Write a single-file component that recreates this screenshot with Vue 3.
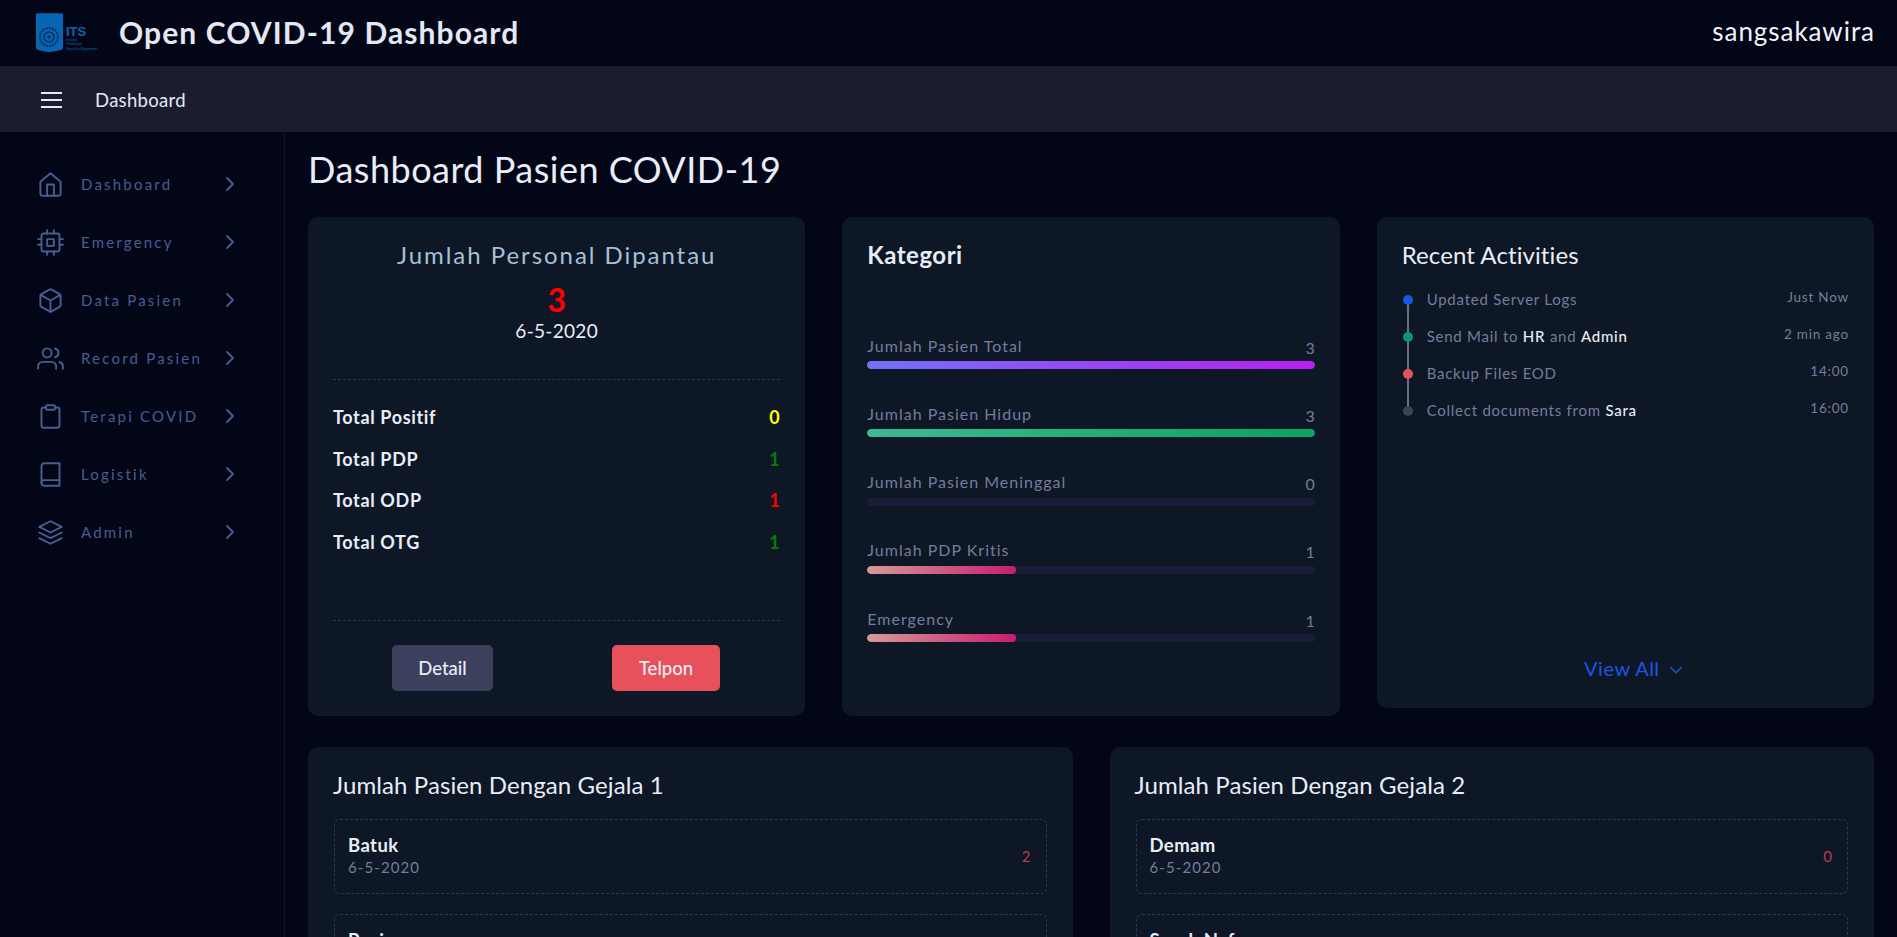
<script setup>
const nav = [
  { label: 'Dashboard', icon: 'home' },
  { label: 'Emergency', icon: 'cpu' },
  { label: 'Data Pasien', icon: 'box' },
  { label: 'Record Pasien', icon: 'users' },
  { label: 'Terapi COVID', icon: 'clip' },
  { label: 'Logistik', icon: 'book' },
  { label: 'Admin', icon: 'layers' },
]
const totals = [
  { label: 'Total Positif', value: 0, color: '#ffff00' },
  { label: 'Total PDP', value: 1, color: '#008000' },
  { label: 'Total ODP', value: 1, color: '#ff0000' },
  { label: 'Total OTG', value: 1, color: '#008000' },
]
const cats = [
  { label: 'Jumlah Pasien Total', value: 3, width: '100%', fill: 'linear-gradient(90deg,#7571f9,#b81ff0)' },
  { label: 'Jumlah Pasien Hidup', value: 3, width: '100%', fill: 'linear-gradient(90deg,#3cba92,#0ba360)' },
  { label: 'Jumlah Pasien Meninggal', value: 0, width: '0%', fill: 'none' },
  { label: 'Jumlah PDP Kritis', value: 1, width: '33.3%', fill: 'linear-gradient(90deg,#d69a98,#c71d6f)' },
  { label: 'Emergency', value: 1, width: '33.3%', fill: 'linear-gradient(90deg,#d69a98,#c71d6f)' },
]
const lists = [
  { title: 'Jumlah Pasien Dengan Gejala 1', rows: [{ n: 'Batuk', v: 2 }, { n: 'Pusing', v: 1 }] },
  { title: 'Jumlah Pasien Dengan Gejala 2', rows: [{ n: 'Demam', v: 0 }, { n: 'Sesak Nafas', v: 1 }] },
]
</script>

<template>
  <div class="page">
    <header class="topbar">
      <svg class="logo" width="68" height="40" viewBox="0 0 68 40">
        <path d="M0 0.5 C9 0 18 0 27 0.5 L27 35 C27 37 20 38.5 13.5 39 C7 38.5 0 37 0 35 Z" fill="#0567b3"/>
        <circle cx="13" cy="24" r="9" fill="none" stroke="#04315f" stroke-width="2" stroke-dasharray="2 1"/>
        <circle cx="13" cy="24" r="5" fill="none" stroke="#04315f" stroke-width="1.4"/>
        <circle cx="13" cy="24" r="1.8" fill="#04315f"/>
        <text x="30" y="22.5" class="logo-its">ITS</text>
        <text x="30" y="27.5" class="logo-sm">Institut</text>
        <text x="30" y="32" class="logo-sm">Teknologi</text>
        <text x="30" y="36.5" class="logo-sm">Sepuluh Nopember</text>
      </svg>
      <div class="brand">Open COVID-19 Dashboard</div>
      <div class="user">sangsakawira</div>
    </header>
    <div class="subbar">
      <span class="burger"><i></i><i></i><i></i></span>
      <span class="crumb">Dashboard</span>
    </div>
    <div class="body">
      <aside class="side">
        <a v-for="n in nav" :key="n.label" class="nav">
          <svg class="nav-ic" width="27" height="27" viewBox="0 0 24 24" fill="none" stroke="currentColor" stroke-width="1.7" stroke-linecap="round" stroke-linejoin="round">
            <template v-if="n.icon === 'home'">
              <path d="M3 9.5 12 2l9 7.5V20a2 2 0 0 1-2 2H5a2 2 0 0 1-2-2z"/><path d="M9 22V12h6v10"/>
            </template>
            <template v-else-if="n.icon === 'cpu'">
              <rect x="4" y="4" width="16" height="16" rx="2"/><rect x="9" y="9" width="6" height="6"/>
              <path d="M9 1v3M15 1v3M9 20v3M15 20v3M20 9h3M20 14h3M1 9h3M1 14h3"/>
            </template>
            <template v-else-if="n.icon === 'box'">
              <path d="M21 16V8a2 2 0 0 0-1-1.73l-7-4a2 2 0 0 0-2 0l-7 4A2 2 0 0 0 3 8v8a2 2 0 0 0 1 1.73l7 4a2 2 0 0 0 2 0l7-4A2 2 0 0 0 21 16z"/>
              <path d="M3.3 7 12 12l8.7-5M12 22V12"/>
            </template>
            <template v-else-if="n.icon === 'users'">
              <path d="M17 21v-2a4 4 0 0 0-4-4H5a4 4 0 0 0-4 4v2"/><circle cx="9" cy="7" r="4"/>
              <path d="M23 21v-2a4 4 0 0 0-3-3.87M16 3.13a4 4 0 0 1 0 7.75"/>
            </template>
            <template v-else-if="n.icon === 'clip'">
              <path d="M16 4h2a2 2 0 0 1 2 2v14a2 2 0 0 1-2 2H6a2 2 0 0 1-2-2V6a2 2 0 0 1 2-2h2"/>
              <rect x="8" y="2" width="8" height="4" rx="1"/>
            </template>
            <template v-else-if="n.icon === 'book'">
              <path d="M4 19.5A2.5 2.5 0 0 1 6.5 17H20"/><path d="M6.5 2H20v20H6.5A2.5 2.5 0 0 1 4 19.5v-15A2.5 2.5 0 0 1 6.5 2z"/>
            </template>
            <template v-else>
              <path d="M12 2 2 7l10 5 10-5z"/><path d="m2 17 10 5 10-5M2 12l10 5 10-5"/>
            </template>
          </svg>
          <span class="nav-label">{{ n.label }}</span>
          <svg class="nav-ch" width="24" height="24" viewBox="0 0 24 24" fill="none" stroke="currentColor" stroke-width="1.8" stroke-linecap="round" stroke-linejoin="round"><path d="m9 18 6-6-6-6"/></svg>
        </a>
      </aside>
      <main class="main">
        <h1 class="page-title">Dashboard Pasien COVID-19</h1>
        <div class="three">
          <section class="card c1">
            <h2 class="c1-title">Jumlah Personal Dipantau</h2>
            <div class="c1-num">3</div>
            <div class="c1-date">6-5-2020</div>
            <div class="totals">
              <div v-for="t in totals" :key="t.label" class="total">
                <span>{{ t.label }}</span>
                <span :style="{ color: t.color }">{{ t.value }}</span>
              </div>
            </div>
            <div class="btns">
              <button class="btn b-d">Detail</button>
              <button class="btn b-t">Telpon</button>
            </div>
          </section>
          <section class="card c2">
            <h2 class="h-semi">Kategori</h2>
            <div class="cats">
              <div v-for="c in cats" :key="c.label" class="cat">
                <div class="cat-top"><span class="cat-l">{{ c.label }}</span><span class="cat-v">{{ c.value }}</span></div>
                <div class="track"><div class="fill" :style="{ width: c.width, background: c.fill }"></div></div>
              </div>
            </div>
          </section>
          <section class="card c3">
            <h2 class="h-reg">Recent Activities</h2>
            <ul class="tl">
              <li class="tl-row"><i class="dot d-blue"></i><span class="tl-t">Updated Server Logs</span><span class="tl-time">Just Now</span></li>
              <li class="tl-row"><i class="dot d-teal"></i><span class="tl-t">Send Mail to <b>HR</b> and <b>Admin</b></span><span class="tl-time">2 min ago</span></li>
              <li class="tl-row"><i class="dot d-red"></i><span class="tl-t">Backup Files EOD</span><span class="tl-time">14:00</span></li>
              <li class="tl-row"><i class="dot d-gray"></i><span class="tl-t">Collect documents from <b>Sara</b></span><span class="tl-time">16:00</span></li>
            </ul>
            <a class="viewall">View All
              <svg width="22" height="22" viewBox="0 0 24 24" fill="none" stroke="currentColor" stroke-width="1.5" stroke-linecap="round" stroke-linejoin="round"><path d="m6 9 6 6 6-6"/></svg>
            </a>
          </section>
        </div>
        <div class="two">
          <section v-for="l in lists" :key="l.title" class="card lcard">
            <h2 class="h-reg">{{ l.title }}</h2>
            <div v-for="r in l.rows" :key="r.n" class="lrow">
              <div><div class="lname">{{ r.n }}</div><div class="ldate">6-5-2020</div></div>
              <span class="lval">{{ r.v }}</span>
            </div>
          </section>
        </div>
      </main>
    </div>
  </div>
</template>

<style>
html, body { margin: 0; background: #030617; overflow: hidden; }
</style>

<style scoped>
.page { height: 937px; overflow: hidden; background: #030617; font-family: "Lato", "Open Sans", sans-serif; color: #e4e8f2; }
.topbar { height: 67px; box-sizing: border-box; border-bottom: 1px solid #1b1d2e; display: flex; align-items: center; padding: 0 23px 0 36px; }
.logo { flex: none; }
.logo-its { font: 700 13px "Liberation Sans", sans-serif; fill: #0567b3; }
.logo-sm { font: 3.7px "Liberation Sans", sans-serif; fill: #0567b3; }
.brand { margin: 0 0 2px 15px; font-size: 30px; font-weight: 700; letter-spacing: 1.1px; color: #e4e8f2; }
.user { margin: 0 -1px 5px auto; font-size: 26px; letter-spacing: .95px; color: #f0f3fa; }
.subbar { height: 65px; background: #1b1d2e; display: flex; align-items: center; padding-left: 41px; }
.burger { display: flex; flex-direction: column; gap: 5px; width: 21px; }
.burger i { display: block; height: 2px; background: #e4e8f2; }
.crumb { margin-left: 33px; font-size: 18.5px; letter-spacing: .3px; color: #e4e8f2; }
.body { display: flex; }
.side { width: 284px; height: 805px; flex: none; border-right: 1px solid #0e1525; padding-top: 23px; box-sizing: content-box; }
.nav { height: 58px; display: flex; align-items: center; padding-left: 37px; color: #475e90; }
.nav-ic { flex: none; }
.nav-label { margin-left: 17px; width: 137px; font-size: 15px; letter-spacing: 2.2px; white-space: nowrap; }
.nav-ch { flex: none; }
.main { flex: 1; padding: 0 23px 0 23px; min-width: 0; }
.page-title { margin: 17px 0 28px; font-size: 36px; line-height: 40px; font-weight: 400; letter-spacing: .5px; color: #e9edf6; }
.three { display: grid; grid-template-columns: repeat(3, 1fr); gap: 37px; align-items: start; }
.card { background: #0e1726; border-radius: 10px; box-sizing: border-box; }
.c1, .c2 { height: 499px; }
.c3 { height: 491px; position: relative; padding: 23px 25px 0 25px; }
.c1 { padding: 23px 25px 0; text-align: center; }
.c1-title { margin: 0; font-size: 24px; line-height: 30px; font-weight: 400; letter-spacing: 1.95px; color: #a7c0d8; }
.c1-num { margin-top: 11px; font-size: 32px; line-height: 38px; font-weight: 700; color: #ff0000; }
.c1-date { font-size: 19px; line-height: 24px; letter-spacing: .3px; color: #e9edf6; }
.totals { margin-top: 36px; height: 242px; box-sizing: border-box; border-top: 1px dashed #2f3448; border-bottom: 1px dashed #2f3448; padding-top: 17px; }
.total { display: flex; justify-content: space-between; height: 41.7px; line-height: 41.7px; font-size: 18px; font-weight: 700; letter-spacing: .65px; color: #e9edf6; }
.btns { margin-top: 24px; position: relative; display: flex; padding-left: 59px; gap: 119px; }
.btn { height: 46px; border: 0; border-radius: 5px; font: 500 18.5px "Lato", sans-serif; color: #e9edf6; }
.b-d { width: 101px; background: #3d405c; }
.b-t { width: 108px; background: #e8505b; }
.c2 { padding: 23px 25px 0; }
.h-semi { margin: 0; font-size: 24px; line-height: 30px; font-weight: 700; letter-spacing: .5px; color: #e9edf6; }
.h-reg { margin: 0; font-size: 24px; line-height: 30px; font-weight: 400; letter-spacing: .1px; color: #e9edf6; }
.cats { margin-top: 63px; }
.cat { height: 68.25px; }
.cat-top { display: flex; justify-content: space-between; align-items: center; height: 28px; font-size: 16px; letter-spacing: 1px; color: #767c9b; }
.cat-l { margin-bottom: 4px; }
.cat-v { letter-spacing: 0; }
.track { height: 8px; border-radius: 4px; background: #1a1d38; overflow: hidden; }
.fill { height: 100%; border-radius: 4px; }
.tl { list-style: none; margin: 11.5px 0 0; padding: 0; position: relative; }
.tl::before { content: ""; position: absolute; left: 5px; top: 18px; height: 111px; width: 2px; background: #6b7080; }
.tl-row { height: 37px; display: flex; align-items: center; position: relative; font-size: 15px; color: #767c9b; letter-spacing: .75px; }
.dot { width: 10px; height: 10px; border-radius: 50%; flex: none; position: relative; margin-left: 1px; }
.d-blue { background: #1c56e0; }
.d-teal { background: #069488; }
.d-red { background: #e8505b; }
.d-gray { background: #3d405c; }
.tl-t { margin: -2px 0 0 14px; }
.tl-t b { font-weight: 500; color: #e9edf6; }
.tl-time { margin-left: auto; font-size: 13.5px; letter-spacing: .8px; margin-top: -6px; }
.viewall { position: absolute; left: 0; right: 0; top: 438px; display: flex; justify-content: center; align-items: center; gap: 5px; font-size: 20px; color: #1c56e0; padding-left: 20px; letter-spacing: .5px; }
.viewall svg { margin-top: 4px; }
.two { margin-top: 31px; display: grid; grid-template-columns: 1fr 1fr; gap: 37px; }
.lcard { padding: 23px 25px 20px; height: 400px; }
.lrow { margin: 20px 1px 0; height: 75px; box-sizing: border-box; border: 1px dashed #33384f; border-radius: 6px; padding: 10px 15px 0 13px; display: flex; justify-content: space-between; align-items: center; }
.h-reg + .lrow { margin-top: 19px; }
.lname { font-size: 18.5px; line-height: 24px; font-weight: 700; letter-spacing: .4px; color: #e9edf6; }
.ldate { font-size: 15px; line-height: 20px; color: #767c9b; letter-spacing: 1.1px; margin-bottom: 14px; }
.lval { font-size: 15px; color: #b83c50; margin-bottom: 12px; }
</style>
